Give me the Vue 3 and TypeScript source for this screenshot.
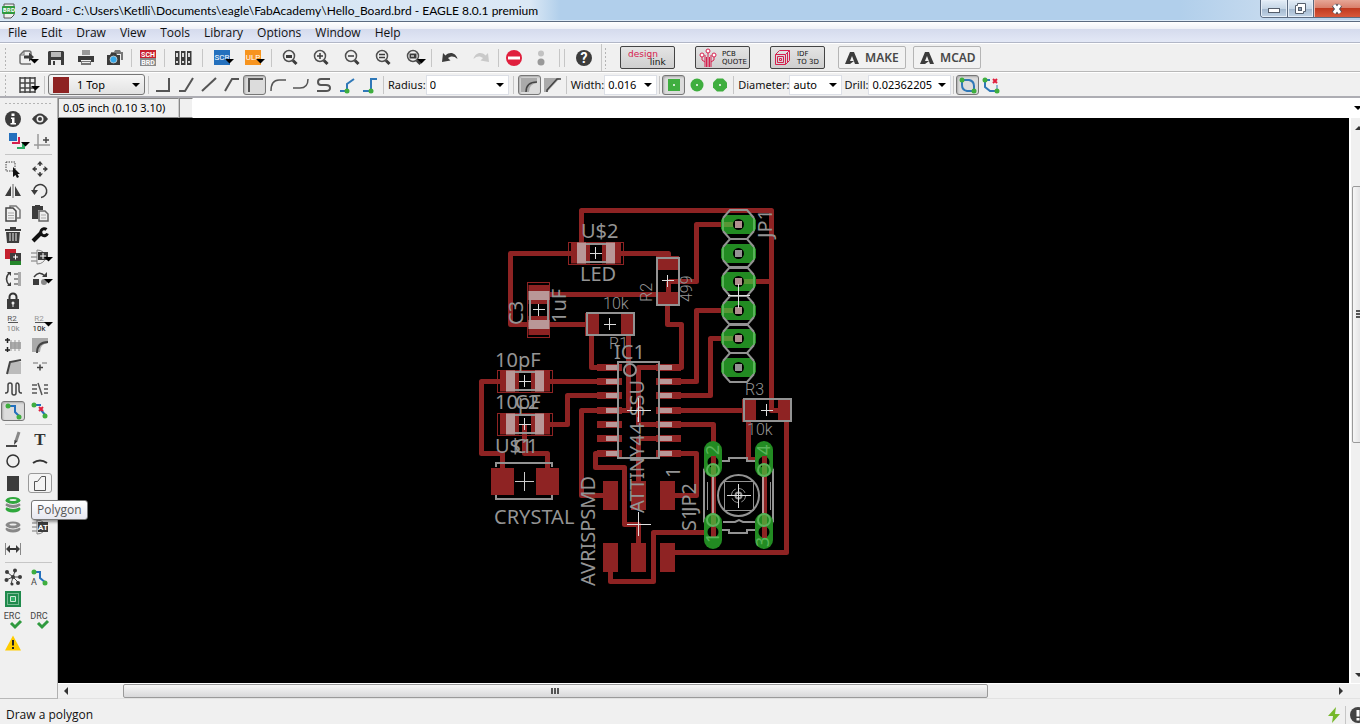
<script setup lang="ts">
import { ref } from 'vue'

interface Tool {
  id: string
  label: string
  size?: string
  on?: boolean
  hover?: boolean
}
type Item = Tool | '|' | '||'

const drop = '<path fill="#000" d="M14 11h9l-4.500 4.500z"/>'
const lens = '<circle cx="11" cy="8" r="5.500" fill="none" stroke="#505050" stroke-width="1.500"/><path d="M15 12.500l3.500 3.500" stroke="#3c3c3c" stroke-width="3"/>'
const dot = (x: number, y: number, r = 2.5): string => `<circle cx="${x}" cy="${y}" r="${r}" fill="#3fae3f"/>`
const line = (d: string, c = '#555', w = 2): string => `<path d="${d}" fill="none" stroke="${c}" stroke-width="${w}"/>`
const word = (t: string, x: number, y: number, s: number, c: string, w = 700): string =>
  `<text x="${x}" y="${y}" font-size="${s}" fill="${c}" font-weight="${w}" text-anchor="middle">${t}</text>`
const via = '<circle cx="12" cy="10" r="1" fill="#fff"/>'

const icons: Record<string, string> = {
  export: line('M15 7V5q0-2-2-2H8L4 7v7q0 2 2 2h9', '#707070', 1.5) + line('M4 7h4V3', '#707070', 1) + '<path d="M8 7.500h5V4.500l5 4.500-5 4.500v-3H8z"/>' + drop,
  save: '<path d="M4 4l1-1h14l1 1v13H4z"/><path fill="#b9b9b9" d="M7 4h10v5H7z"/><path fill="#ededed" d="M7 12h10v5H7z"/><path d="M9 13h2v4H9z"/>',
  print: '<path fill="#999" d="M8 2h8v5H8z"/><path d="M4 8h16v6h-3v-2H7v2H4z"/><path fill="#777" d="M7 13h10v4H7z"/><path fill="#eee" d="M8 14h8v1H8z"/>',
  camera: '<path fill="#777" d="M8 4h3l1-2h5l1 2h2v8h-2V6H8z"/><path d="M4 7h3l1-2h5l1 2h3v10H4z"/><circle cx="10.500" cy="11.500" r="3.500" fill="#36a7e8" stroke="#ddd" stroke-width=".7"/>',
  schbrd: '<path fill="#c8202f" d="M4 2h16v8H4z"/><path fill="#8a8a8a" d="M4 10h16v8H4z"/>' + word('SCH', 12, 9, 7, '#fff') + word('BRD', 12, 17, 7, '#fff'),
  library: '<path d="M4 3h4.500v14H4zM10 3h4.500v14H10zM16 3h4.500v14H16z"/><path fill="#ddd" d="M5 5h2v4H5zM11 5h2v4h-2zM17 5h2v4h-2zM5 13h2v2H5zM11 13h2v2h-2zM17 13h2v2h-2z"/>',
  scr: '<path fill="#2470bd" d="M3 2h16v15H3z"/>' + word('SCR', 11, 12, 8, '#fff', 400) + drop,
  ulp: '<path fill="#f7941e" d="M3 2h16v15H3z"/>' + word('ULP', 11, 12, 8, '#fff', 400) + drop,
  zfit: lens + '<path d="M8 7h6v3H8z"/>',
  zin: lens + line('M8 8h6M11 5v6', '#3c3c3c', 1.5),
  zout: lens + line('M8 8h6', '#3c3c3c', 1.5),
  zredraw: lens + line('M8 6.500h6M8 9.500h6', '#3c3c3c', 1.5),
  zselect: lens + '<path d="M7.500 5.500h7v5h-7z"/><path fill="#aaa" d="M9 7h3v2H9z"/><path fill="#000" d="M15 11h9l-4.500 4.500z"/>',
  undo: '<path d="M4 14l1-9 2.500 2.500C12 3 18 5 19.500 11 16 7.500 12.500 8 10 10l2.500 2.500z"/>',
  redo: '<path fill="#c9c9c9" d="M20 14l-1-9-2.500 2.500C12 3 6 5 4.500 11 8 7.500 11.500 8 14 10l-2.500 2.500z"/>',
  stop: '<circle cx="11" cy="10" r="8" fill="#e01f3d"/><path fill="#fff" d="M5 8.500h12v3H5z"/>',
  traffic: '<circle cx="10" cy="5.500" r="3" fill="#c2c2c2"/><circle cx="10" cy="14" r="3.500" fill="#999"/>',
  help: '<circle cx="13" cy="10" r="8"/>' + word('?', 13, 15, 14, '#fff'),
  grid: line('M4 2v16M9 2v16M14 2v16M19 2v16M4 3h15M4 8h15M4 13h15M4 17h15', '#444', 1.5) + '<path fill="#000" d="M15 11h9l-4.500 4.500z"/>',
  b0: line('M5 16h13V3'), b1: line('M5 16h6l8-13'), b2: line('M5 16l14-13'), b3: line('M5 16l7-12h7'),
  b4: line('M6 17V4h14'), b5: line('M5 16Q5 5 13 5h7', '#555', 1.5), b6: line('M4 13h7q8 0 8-9', '#555', 1.5),
  b7: line('M18 4H9q-3 0-3 3t3 3h5q4 0 4 3t-4 3H5'),
  b8: line('M5 16h7V9l7-5', '#2f78b8') + dot(12, 16), b9: line('M5 16h8V4h6', '#2f78b8') + dot(13, 16),
  miter1: '<path fill="#aaa" d="M4 3h16v5q-8 1-8 9H4z"/>' + line('M9 17Q9 7 20 7', '#444', 1.5),
  miter2: '<path fill="#aaa" d="M4 3h16L7 17H4z"/>' + line('M7 17v-2L17 4h4', '#444', 1.5),
  vsq: '<path fill="#3fae3f" d="M6 4h12v12H6z"/>' + via,
  vround: '<circle cx="12" cy="10" r="6.500" fill="#3fae3f"/>' + via,
  voct: '<path fill="#3fae3f" d="M9 3.500h6l4 4v5l-4 4H9l-4-4v-5z"/>' + via,
  poly1: line('M6 5h7q5 1 5 6v5h-7q-5-1-5-6z', '#2f78b8') + dot(6, 5) + dot(18, 16),
  poly2: line('M11 5H6v7l5 4h7', '#2f78b8') + line('M18 10v5', '#2f78b8', 1) + dot(6, 5) + dot(18, 16) + line('M14 4l4 4M18 4l-4 4', '#e01f3d'),
  info: '<circle cx="12" cy="10" r="8"/><path fill="#fff" d="M10.500 4.500h3v2.500h-3zM10 8.500h3.500V14H15v1.500H9.500V14H11v-4h-1z"/>',
  show: '<path d="M4 10q8-11 16 0-8 11-16 0z"/><circle cx="12" cy="10" r="3.500" fill="#eee"/><circle cx="12" cy="10" r="2"/>',
  layers: '<path fill="#2470bd" d="M8 2h8v8H8z"/><path fill="#d6204e" d="M17 6h2v7h-8v-2h6z"/><path fill="#2bab62" d="M21 11h3v7h-8v-2h5z"/><path fill="#000" d="M20 11h9l-4.500 4.500z"/>',
  mark: line('M10 3v15M6 14h16', '#999', 1.5) + line('M15 9h6M18 6v6', '#444', 1.5),
  group: '<path d="M5 3h9v9H5z" fill="none" stroke="#444" stroke-dasharray="1.500 1"/><path fill="#111" d="M12 8v10l2.500-2 1.500 3 2-1-1.500-3H19z"/>',
  move: '<path d="M12 2l3 3.500H9zM12 18l3-3.500H9zM4 10l3.500-3v6zM20 10l-3.500-3v6z"/>' + line('M12 5v2M12 13v2M7 10h2M15 10h2', '#3c3c3c', 1.5),
  mirror: '<path fill="#aaa" d="M11 3h2v14h-2z"/><path d="M4 15L10 5v10zM20 15L14 5v10z"/>',
  rotate: line('M6 12a6.500 6.500 0 1 1 7 4.500', '#3c3c3c', 1.5) + '<path d="M3 9h7l-3.500 5z"/>',
  copy: line('M9 5V3h6l4 4v8h-3', '#777', 1.5) + line('M5 5h7l3 3v10H5z', '#444', 1.5) + line('M7 10h6M7 12.500h6M7 15h6', '#aaa', 1),
  paste: '<path d="M4 3h3V2h5v1h3v4h-5v9H4z"/><path fill="#eee" stroke="#666" stroke-width="1.500" d="M11 8h6l3 3v7h-9z"/>' + line('M13 12h5M13 15h5', '#aaa', 1),
  trash: '<path d="M4 4h5V2h6v2h5v2H4zM5 7h14l-1 11H6z"/>' + line('M9 8v8M12 8v8M15 8v8', '#eee', 1),
  wrench: line('M5 16l8-8', '#111', 4) + line('M18.500 4.500a3.500 3.500 0 1 0 1 4', '#111', 3),
  add: '<path fill="#c4202e" d="M4 2h11v10H4z"/><path fill="#25862b" d="M9 9h11v9H9z"/><path d="M9 6h11v8H9z"/>' + line('M12 10h5M14.500 7.500v5', '#fff', 1),
  pinswap: line('M3 6h6M3 10h6M3 14h6', '#777', 1) + line('M9 3q7 0 9 7-2 7-9 7z', '#888', 1) + '<path d="M10 5h10v8H10z"/>' + line('M12 9h6M15 6v6', '#fff', 1) + '<path fill="#000" d="M16 10h9l-4.500 4.500z"/>',
  replace: line('M8 4q-5 6 0 12', '#3c3c3c', 1.5) + '<path d="M6 3h4v4zM6 17h4v-4z"/>' + line('M13 5h5M13 10h5M13 15h5', '#777', 1.5) + '<path fill="#aaa" d="M17 3h3v14h-3z"/>',
  gate: '<path d="M5 10h6v6H5z"/><circle cx="16" cy="13" r="3" fill="#888"/>' + line('M6 8q5-7 11-1', '#3c3c3c', 1.5) + '<path d="M14 8h5V3z"/><path fill="#000" d="M16 10h9l-4.500 4.500z"/>',
  lock: line('M8.500 9V6a3.500 3.500 0 0 1 7 0v3', '#333', 2) + '<path d="M6 8h12v10H6z"/><circle cx="12" cy="12" r="1.500" fill="#eee"/><path fill="#eee" d="M11.500 12h1v4h-1z"/>',
  name: word('R2', 11, 8, 8, '#555', 400) + line('M7 9.500h10', '#555', 1) + word('10k', 12, 18, 8, '#888', 400),
  value: word('R2', 11, 8, 8, '#999', 400) + line('M7 9.500h10', '#555', 1) + word('10k', 11, 18, 8, '#111', 400) + '<path fill="#000" d="M16 9h9l-4.500 4.500z"/>',
  smash: '<path fill="#aaa" d="M9 7h11v7H9z"/>' + line('M10 5v11M14 5v11M18 5v11', '#999', 1) + line('M4 5h5M6.500 3v5M4 15h5M6.500 12v5', '#222', 1.5),
  miter: '<path fill="#aaa" d="M4 3h16v5q-8 1-8 9H4z"/>' + line('M9 18Q9 7 20 7', '#444'),
  split: '<path fill="#bbb" d="M9 5h11v12H6z"/>' + line('M6 17L9 5l11-2', '#444'),
  optimize: line('M5 6h5M14 6h5', '#999', 1.5) + line('M12 7.500v6M9 10.500h6', '#444', 1.5),
  meander: line('M4 14h1q2 0 2-3V6q0-2 2-2t2 2v8q0 2 2 2t2-2V6q0-2 1-2 2 0 2 3v4q0 3 2 3h1', '#444', 1.5),
  lanes: line('M4 6h5M4 10h5M4 14h5M16 6h4M16 10h4M16 14h4', '#555', 1.5) + line('M10 4l4 12', '#555', 1.5),
  route: line('M7 5h7v6l5 5', '#2470bd', 2) + dot(7, 5) + dot(18, 16),
  ripup: line('M6 4h7M13 9l5 6', '#2470bd', 2) + dot(6, 4) + dot(17, 15) + line('M11 6l4 4M15 6l-4 4', '#e01f3d', 2),
  wire: line('M5 17h11', '#111', 1.5) + line('M15 12l3-9', '#888', 3) + '<path d="M13.500 11l3 1-3.500 4z"/>',
  text: '<text x="12" y="16" font-size="17" font-family="Liberation Serif" text-anchor="middle" font-weight="700" fill="#333">T</text>',
  circle: '<circle cx="12" cy="10" r="6" fill="none" stroke="#333" stroke-width="1.500"/>',
  arc: line('M5 12q7-5 14 0', '#333', 2),
  rect: '<path d="M6 3h12v15H6z"/>',
  polygon: line('M6.500 17.500v-9h3l4-5h4v14z', '#555', 1),
  via: '<ellipse cx="12" cy="14" rx="7.500" ry="3.500" fill="#2fa83c"/><ellipse cx="12" cy="10" rx="7.500" ry="3.500" fill="#888"/><ellipse cx="12" cy="5.500" rx="7.500" ry="3.500" fill="#2fa83c"/><ellipse cx="12" cy="5" rx="3.500" ry="1" fill="#eee"/>' + line('M5 7.500q7 4 14 0M5 11.500q7 4 14 0', '#eee', 1),
  hole: '<ellipse cx="12" cy="12" rx="7.500" ry="3.500" fill="#888"/><ellipse cx="12" cy="8" rx="7.500" ry="3.500" fill="#888"/><ellipse cx="12" cy="7.500" rx="3.500" ry="1" fill="#eee"/>' + line('M5 10q7 4 14 0', '#eee', 1),
  attr: line('M4 6h5M4 10h5M4 14h5', '#777', 1) + line('M9 3q7 0 9 7-2 7-9 7z', '#888', 1) + '<path d="M10 5h10v10H10z"/>' + word('AT', 15, 13, 8, '#fff'),
  dim: line('M4.500 4v12M19.500 4v12', '#888', 1) + line('M8 10h8', '#333', 2) + '<path d="M5 10l4-4v8zM19 10l-4-4v8z"/>',
  ratsnest: line('M6 5l6 5 2-6M5 13l7-3 7 0M10 17l2-7 5 5', '#444', 1) + '<circle cx="6" cy="5" r="2"/><circle cx="14" cy="3.500" r="2"/><circle cx="12" cy="10" r="2"/><circle cx="5.500" cy="13" r="2"/><circle cx="19" cy="10" r="2"/><circle cx="17" cy="16" r="2"/><circle cx="11" cy="17" r="1.500"/>',
  auto: line('M6 5h6v6l6 5', '#2470bd', 2) + dot(6, 5) + dot(17, 16) + word('A', 6, 18, 9, '#444', 400),
  fab: '<path fill="#1f8a4c" d="M4 2h16v16H4z"/><path fill="none" stroke="#cfe8d6" stroke-dasharray="1 1" d="M6.500 4.500h11v11h-11z"/><path fill="#2fae66" stroke="#cfe8d6" d="M9.500 7.500h5v5h-5z"/>',
  erc: word('ERC', 11, 8, 9, '#444', 400) + line('M10 12l4 4 6-6', '#2f9a3f', 3),
  drc: word('DRC', 11, 8, 9, '#444', 400) + line('M10 12l4 4 6-6', '#2f9a3f', 3),
  warn: '<path fill="#fc0" d="M12 2.500L20 17.500H4z"/><path fill="#222" d="M11 7h2v5.500h-2zM11 14h2v2h-2z"/>',
}

const t = (id: string, label: string, size = 'md', extra: Partial<Tool> = {}): Tool => ({ id, label, size, ...extra })

const mainTools: Item[] = [
  t('export', 'Open', 'sm'), t('save', 'Save', 'sm'), t('print', 'Print'), t('camera', 'CAM', 'sm'), '|',
  t('schbrd', 'Schematic', 'sm'), '|', t('library', 'Use library'), '||',
  t('scr', 'Script'), t('ulp', 'ULP'), '|',
  t('zfit', 'Zoom to fit'), t('zin', 'Zoom in'), t('zout', 'Zoom out'), t('zredraw', 'Redraw'), t('zselect', 'Zoom select'), '|',
  t('undo', 'Undo'), t('redo', 'Redo'), '|',
  t('stop', 'Stop', 'sm'), t('traffic', 'Go', 'sm'), '|', '|', t('help', 'Help'),
]

const bends: Tool[] = [0, 1, 2, 3, 4, 5, 6, 7, 8, 9].map((i) => t('b' + i, 'Bend style ' + i, 'xs', { on: i === 4 }))

const palette: Tool[][] = [
  [t('info', 'Info'), t('show', 'Show'), t('layers', 'Layer settings'), t('mark', 'Mark')],
  [
    t('group', 'Group'), t('move', 'Move'), t('mirror', 'Mirror'), t('rotate', 'Rotate'), t('copy', 'Copy'), t('paste', 'Paste'),
    t('trash', 'Delete'), t('wrench', 'Change'), t('add', 'Add'), t('pinswap', 'Pinswap'), t('replace', 'Replace'), t('gate', 'Gateswap'),
    t('lock', 'Lock'), t('', ''), t('name', 'Name'), t('value', 'Value'), t('smash', 'Smash'), t('miter', 'Miter'), t('split', 'Split'),
    t('optimize', 'Optimize'), t('meander', 'Meander'), t('lanes', 'Lanes'), t('route', 'Route', 'md', { on: true }), t('ripup', 'Ripup'),
  ],
  [
    t('wire', 'Wire'), t('text', 'Text'), t('circle', 'Circle'), t('arc', 'Arc'), t('rect', 'Rect'), t('polygon', 'Polygon', 'md', { hover: true }),
    t('via', 'Via'), t('', ''), t('hole', 'Hole'), t('attr', 'Attribute'), t('dim', 'Dimension'),
  ],
  [t('ratsnest', 'Ratsnest'), t('auto', 'Autorouter'), t('fab', 'Manufacturing'), t('', ''), t('erc', 'ERC'), t('drc', 'DRC'), t('warn', 'Errors')],
]

const menus = ['File', 'Edit', 'Draw', 'View', 'Tools', 'Library', 'Options', 'Window', 'Help']

const layer = ref('1 Top')
const radius = ref('0')
const width = ref('0.016')
const diameter = ref('auto')
const drill = ref('0.02362205')
const command = ref('')

// Copper routes on the top layer
const traces: string[] = [
  'M581 243V210H771V410H783', 'M586 253H510V324H587', 'M606 253H668V260', 'M548 294H668V281', 'M591 334V367H605',
  'M628 334V410H605', 'M667 304V324H681V367H664', 'M668 281H696V224H738', 'M738 281H772', 'M738 310H696V381H664',
  'M738 338H710V395H664', 'M664 410H745', 'M664 367H638V424H713V532', 'M664 438H638V490', 'M664 453H696V495H668',
  'M545 381H605', 'M605 395H567V424H545', 'M605 410H581V495H605', 'M605 453H595V467H624V524H638V550',
  'M505 381H481V453H502V472', 'M524 424V453H547V472', 'M610 560V581H653V532H714', 'M786 418V552H668', 'M748 418V459H764V531',
]
const icRows = [367, 381, 395, 410, 424, 438, 453]
const caps = [
  { x: 596, y: 253, r: 0 }, { x: 525, y: 381, r: 0 }, { x: 525, y: 424, r: 0 }, { x: 539, y: 310, r: 90 },
]
const resistors = [
  { x: 610, y: 324, r: 0 }, { x: 668, y: 281, r: 90 }, { x: 767, y: 410, r: 0 },
]
const headerPins = [
  { y: 224, side: -1 }, { y: 253, side: 0 }, { y: 281, side: 1 }, { y: 310, side: -1 }, { y: 338, side: -1 }, { y: 367, side: 0 },
]
const smdPads = [603, 631, 660]
const switchPads = [
  { x: 704, y: 441, hole: 462, ring: 470 }, { x: 755, y: 441, hole: 462, ring: 470 },
  { x: 704, y: 513, hole: 532, ring: 520 }, { x: 755, y: 513, hole: 532, ring: 520 },
]
const labels = [
  { s: 'U$2', x: 581, y: 238 }, { s: 'LED', x: 580, y: 281 }, { s: 'C3', x: 523, y: 325, v: 1 }, { s: '1uF', x: 566, y: 323, v: 1 },
  { s: 'IC1', x: 614, y: 359 }, { s: '10pF', x: 495, y: 367 }, { s: '10pF', x: 495, y: 409 }, { s: 'C2', x: 515, y: 409 },
  { s: 'U$1', x: 495, y: 453 }, { s: 'C1', x: 514, y: 453 }, { s: 'CRYSTAL', x: 494, y: 524 }, { s: 'AVRISPSMD', x: 595, y: 586, v: 1 },
  { s: 'ATTINY44-SSU', x: 644, y: 513, v: 1 }, { s: '1', x: 680, y: 478, v: 1 }, { s: 'S1', x: 696, y: 531, v: 1 }, { s: 'JP2', x: 696, y: 512, v: 1 },
  { s: 'JP1', x: 772, y: 238, v: 1 },
]
const thinLabels = [
  { s: '10k', x: 603, y: 309 }, { s: 'R1', x: 609, y: 349 }, { s: 'R2', x: 652, y: 302, v: 1 }, { s: '499', x: 692, y: 302, v: 1 },
  { s: 'R3', x: 745, y: 395 }, { s: '10k', x: 747, y: 435 },
]
const padLabels = [
  { s: '2', x: 719, y: 455 }, { s: '4', x: 770, y: 455 }, { s: '1', x: 719, y: 543 }, { s: '3', x: 769, y: 547 },
]
</script>

<template>
  <div class="window">
    <header class="titlebar">
      <svg class="app-icon" viewBox="0 0 16 16"><path d="M3 1h10v11l-3 3H3z" fill="#eee" stroke="#555" /><rect x="1" y="3" width="13" height="8" rx="1" fill="#2f9a3f" /><text x="8" y="9" font-size="6" font-weight="700" fill="#fff" text-anchor="middle">BRD</text></svg>
      <h1>2 Board - C:\Users\Ketlli\Documents\eagle\FabAcademy\Hello_Board.brd - EAGLE 8.0.1 premium</h1>
      <div class="win-buttons">
        <button class="wb min" aria-label="Minimize"><svg width="14" height="12"><rect x="1.500" y="5.500" width="11" height="4" fill="#fff" stroke="#555e6b" /></svg></button>
        <button class="wb max" aria-label="Restore"><svg width="14" height="14"><path d="M4.500 1.500h8v8h-2v2h-8v-8h2z" fill="#fff" stroke="#555e6b" /><rect x="5.500" y="5.500" width="3" height="3" fill="#8ba0b8" stroke="#555e6b" /></svg></button>
        <button class="wb close" aria-label="Close"><svg width="14" height="12"><path d="M4 2l6 8M10 2l-6 8" stroke="#4b4f5c" stroke-width="5" /><path d="M4 2l6 8M10 2l-6 8" stroke="#fff" stroke-width="3" /></svg></button>
      </div>
    </header>

    <nav class="menubar">
      <button v-for="m in menus" :key="m">{{ m }}</button>
    </nav>

    <div class="toolbar first">
      <span class="grip"></span>
      <template v-for="(it, i) in mainTools" :key="i">
        <span v-if="it === '|'" class="sep"></span>
        <span v-else-if="it === '||'" class="sep wide"></span>
        <button v-else class="tool" :class="it.size" :aria-label="it.label"><svg class="ic" viewBox="0 0 24 20" v-html="icons[it.id]"></svg></button>
      </template>
      <span class="sep edge"></span>
      <span class="grip second"></span>
      <button class="promo design"><span class="red">design</span><span class="link">link</span></button>
      <button class="promo">
        <svg width="18" height="20" viewBox="0 0 18 20"><path d="M3 9v3l3 2v5M9 5v14M15 9v3l-3 2v5M6 7v7M12 7v7M7.500 9v10M10.500 9v10" fill="none" stroke="#d6204e" stroke-width="1" /><g fill="#fff" stroke="#d6204e"><circle cx="3" cy="7" r="2" /><circle cx="9" cy="3" r="2" /><circle cx="15" cy="7" r="2" /></g></svg>
        <span class="two">PCB<br />QUOTE</span>
      </button>
      <button class="promo">
        <svg width="18" height="18" viewBox="0 0 18 18"><path d="M1.500 5.500h10v10h-10zM1.500 5.500l4-4h10v10l-4 4M11.500 5.500l4-4M3.500 7.500h6v6h-6zM5.500 9.500h2v2h-2zM13.500 4v9" fill="none" stroke="#d6204e" /></svg>
        <span class="two">IDF<br />TO 3D</span>
      </button>
      <button class="brand"><svg width="14" height="14" viewBox="0 0 14 14"><path d="M0 13L5 1h4l5 12h-4L7 5l-2 5h4l-4 3z" fill="#3c3c3c" /></svg>MAKE</button>
      <button class="brand"><svg width="14" height="14" viewBox="0 0 14 14"><path d="M0 13L5 1h4l5 12h-4L7 5l-2 5h4l-4 3z" fill="#3c3c3c" /></svg>MCAD</button>
    </div>

    <div class="toolbar params">
      <span class="grip"></span>
      <button class="tool sm" aria-label="Grid"><svg class="ic" viewBox="0 0 24 20" v-html="icons.grid"></svg></button>
      <span class="sep"></span>
      <span class="combo layer">
        <i class="swatch"></i>
        <select v-model="layer" aria-label="Layer"><option>1 Top</option><option>16 Bottom</option></select>
        <i class="arrow"></i>
      </span>
      <span class="sep"></span>
      <button v-for="b in bends" :key="b.id" class="tool xs" :class="{ on: b.on }" :aria-label="b.label"><svg class="ic" viewBox="0 0 24 20" v-html="icons[b.id]"></svg></button>
      <span class="sep"></span>
      <label for="radius">Radius:</label>
      <span class="combo w82"><select id="radius" v-model="radius"><option>0</option></select><i class="arrow"></i></span>
      <span class="sep wide"></span>
      <button class="tool xs on" aria-label="Round miter"><svg class="ic" viewBox="0 0 24 20" v-html="icons.miter1"></svg></button>
      <button class="tool xs" aria-label="Straight miter"><svg class="ic" viewBox="0 0 24 20" v-html="icons.miter2"></svg></button>
      <span class="sep"></span>
      <label for="width">Width:</label>
      <span class="combo w53"><select id="width" v-model="width"><option>0.016</option></select><i class="arrow"></i></span>
      <span class="sep"></span>
      <button class="tool xs on" aria-label="Square via"><svg class="ic" viewBox="0 0 24 20" v-html="icons.vsq"></svg></button>
      <button class="tool xs" aria-label="Round via"><svg class="ic" viewBox="0 0 24 20" v-html="icons.vround"></svg></button>
      <button class="tool xs" aria-label="Octagon via"><svg class="ic" viewBox="0 0 24 20" v-html="icons.voct"></svg></button>
      <span class="sep"></span>
      <label for="diameter">Diameter:</label>
      <span class="combo w53"><select id="diameter" v-model="diameter"><option>auto</option></select><i class="arrow"></i></span>
      <label for="drill">Drill:</label>
      <span class="combo w82"><select id="drill" v-model="drill"><option>0.02362205</option></select><i class="arrow"></i></span>
      <span class="sep"></span>
      <button class="tool xs on" aria-label="Keep loops"><svg class="ic" viewBox="0 0 24 20" v-html="icons.poly1"></svg></button>
      <button class="tool xs" aria-label="Remove loops"><svg class="ic" viewBox="0 0 24 20" v-html="icons.poly2"></svg></button>
    </div>

    <div class="body">
      <aside class="palette">
        <span class="hgrip"></span>
        <div v-for="(group, g) in palette" :key="g" class="group">
          <template v-for="(it, i) in group" :key="i">
            <span v-if="!it.id" class="cell"></span>
            <span v-else class="cell">
              <button class="tool" :class="{ on: it.on, hover: it.hover }" :aria-label="it.label"><svg class="ic" viewBox="0 0 24 20" v-html="icons[it.id]"></svg></button>
              <span v-if="it.hover" class="tooltip" role="tooltip">{{ it.label }}</span>
            </span>
          </template>
        </div>
      </aside>

      <main class="work">
        <div class="cmdline">
          <output class="coords">0.05 inch (0.10 3.10)</output>
          <span class="slot"></span>
          <input v-model="command" type="text" aria-label="Command line" />
          <i class="arrow end"></i>
        </div>
        <div class="view">
          <svg class="board" viewBox="58 118 1291 565" preserveAspectRatio="xMinYMin slice">
            <g transform="translate(.5 .5)" fill="none" stroke="#8e2323" stroke-width="5" stroke-linejoin="round"><path v-for="d in traces" :key="d" :d="d" /></g>

            <g v-for="y in icRows" :key="y">
              <path :d="`M597 ${y - 3}h25v7h-25zM656 ${y - 3}h25v7h-25z`" fill="#8e2323" />
              <path :d="`M606 ${y - 2}h13v5h-13zM659 ${y - 2}h13v5h-13z`" fill="#b99797" />
            </g>
            <g v-for="x in smdPads" :key="x" fill="#8e2323"><rect :x="x" y="481" width="15" height="29" /><rect :x="x" y="543" width="15" height="29" /></g>
            <path d="M491 468h23v27h-23zM536 468h23v27h-23z" fill="#8e2323" />
            <path d="M496 467v-4h56v4M496 495v4h56v-4" fill="none" stroke="#939393" stroke-width="2" />
            <path d="M515 481.500h19M524.500 472v19" stroke="#ccc" />

            <g v-for="(c, i) in caps" :key="'c' + i" :transform="`translate(${c.x} ${c.y}) rotate(${c.r})`">
              <path d="M-25-10.500h19v21h-19zM6-10.500h19v21h-19z" fill="#8e2323" />
              <rect x="-27.500" y="-10.500" width="55" height="22" fill="none" stroke="#8e2323" />
              <path d="M-19-10.500h9v21h-9zM10-10.500h9v21h-9z" fill="#b99797" />
              <path d="M-10-9h20M-10 9h20" stroke="#939393" stroke-width="2" />
              <path d="M-6 .5h12M-.5-6v12" stroke="#ddd" />
            </g>
            <g v-for="(c, i) in resistors" :key="'r' + i" :transform="`translate(${c.x} ${c.y}) rotate(${c.r})`">
              <path d="M-25-11h14v23h-14zM11-11h14v23h-14z" fill="#8e2323" />
              <rect x="-23" y="-11" width="47" height="22" fill="none" stroke="#939393" stroke-width="2" />
              <path d="M-6 .5h12M-.5-6v12" stroke="#ddd" />
            </g>

            <g fill="none" stroke="#939393" stroke-width="2">
              <path d="M618 362H659V458H618z" />
              <circle cx="630" cy="370" r="6" />
            </g>

            <g v-for="p in headerPins" :key="p.y" :transform="`translate(738 ${p.y})`">
              <path d="M-12-9h25l5 5v9l-5 5h-25l-5-5v-9z" fill="#228b22" />
              <path v-if="p.side" :d="p.side < 0 ? 'M-15 .5H-5' : 'M15 .5H5'" stroke="#5a9636" stroke-width="5" />
              <circle cx=".5" cy=".5" r="5.500" fill="#000" />
              <rect x="-3" y="-3" width="7" height="7" :fill="p.side ? '#b08f8f' : '#939393'" />
              <path d="M-15-6V7M16-6V7" stroke="#59b359" stroke-width="2" />
              <path d="M-15-6l7-8h17l7 8M-15 7l7 8h17l7-8" fill="none" stroke="#939393" stroke-width="2" />
            </g>

            <g fill="none" stroke="#939393" stroke-width="2">
              <path d="M711 461h18v-3h18v3h18M711 530h18v3h18v-3h18M704 469v53M773 469v53M704 469l8-8M773 469l-8-8M704 522l8 8M773 522l-8 8" />
              <path d="M723 522h12l4-2 4 2h12" />
              <circle cx="738.500" cy="495.500" r="20.500" />
              <path d="M707.500 482v28M770.500 482v28M724.500 481.500h29v29h-29z" stroke-width="1" />
              <circle cx="738.500" cy="495.500" r="7" stroke-width="1" stroke-dasharray="8 3" />
              <circle cx="738.500" cy="495.500" r="3" />
            </g>
            <g v-for="p in switchPads" :key="p.x + '-' + p.y">
              <rect :x="p.x" :y="p.y" width="18" height="36" rx="9" fill="#228b22" />
              <circle :cx="p.x + 9" :cy="p.hole" r="5.500" fill="#000" />
              <path :d="`M${p.x + 9.500} ${p.hole - 6}v12`" stroke="#8e2323" stroke-width="5" />
              <path :d="`M${p.x + 9.500} ${p.ring - 6}v12`" stroke="#5a9636" stroke-width="5" />
              <circle :cx="p.x + 9" :cy="p.ring" r="6" fill="none" stroke="#59b359" stroke-width="2" />
            </g>
            <path d="M713 477v36M763 477v36" stroke="#b99797" stroke-width="2" />

            <g class="silk">
              <text v-for="(l, i) in labels" :key="i" :transform="`translate(${l.x} ${l.y}) rotate(${l.v ? -90 : 0})`">{{ l.s }}</text>
            </g>
            <g class="silk thin">
              <text v-for="(l, i) in thinLabels" :key="i" :transform="`translate(${l.x} ${l.y}) rotate(${l.v ? -90 : 0})`">{{ l.s }}</text>
            </g>
            <g class="silk pad">
              <text v-for="(l, i) in padLabels" :key="i" :transform="`translate(${l.x} ${l.y}) rotate(-90)`">{{ l.s }}</text>
            </g>
            <path d="M627 410.500h24M638.500 398v24M627 524.500h24M638.500 512v24M728 295.500h22M738.500 284v24M727 495.500h24M738.500 484v24" stroke="#e0e0e0" />
          </svg>
          <div class="vscroll">
            <i class="tri up"></i><span class="lead"></span><span class="thumb"><i></i></span><span class="trail"></span><i class="tri down"></i>
          </div>
        </div>
        <div class="hscroll">
          <i class="tri left"></i><span class="lead"></span><span class="thumb"><i></i></span><span class="trail"></span><i class="tri right"></i>
        </div>
      </main>
    </div>

    <footer class="status">
      <span class="msg">Draw a polygon</span>
      <svg width="14" height="18" viewBox="0 0 14 18"><path d="M9 1L1 10h5l-1 7 8-9H8z" fill="#76b82a" /></svg>
      <span class="sep"></span>
      <span class="alert"><svg width="16" height="16" viewBox="0 0 16 16"><circle cx="8" cy="8" r="8" fill="#444" /><path d="M6.500 3h3v6.500h-3zM6.500 11h3v2.500h-3z" fill="#fff" /></svg></span>
    </footer>
  </div>
</template>

<style>
html, body { margin: 0; overflow: hidden; }
</style>

<style scoped>
.window { display: flex; flex-direction: column; height: 100vh; overflow: hidden; background: #f0f0f0; color: #111; font: 12px/16px "Open Sans", "Noto Sans", sans-serif; }
button { font: inherit; color: inherit; padding: 0; margin: 0; border: 0; background: none; }
svg { display: block; flex: none; }

.titlebar { display: flex; align-items: center; height: 21px; flex: none; border-bottom: 1px solid #5b6b80; background: linear-gradient(90deg, #d3e3f3, #dbe8f5 530px, #b1cfeb 560px, #b1cfeb 1180px, #c4d9ee 1260px, #b9d1ea); box-shadow: inset 0 -1px #dcebf8; }
.app-icon { width: 16px; height: 16px; margin: 0 4px 0 1px; }
h1 { flex: 1; margin: 0; font: 400 12px/22px Lato, "Open Sans", sans-serif; color: #000; white-space: nowrap; }
.win-buttons { display: flex; align-self: flex-start; width: 100px; height: 18px; overflow: hidden; box-sizing: border-box; border: 1px solid #5b6b80; border-top: 0; border-right: 0; border-radius: 0 0 0 4px; }
.wb { display: flex; align-items: center; justify-content: center; border-right: 1px solid #5b6b80; background: linear-gradient(#e3edf7, #c6d6e6 50%, #a2b7cd 51%, #c3d5e7); box-shadow: inset 0 0 0 1px #e6eef7; }
.min { width: 28px; }
.max { width: 27px; }
.close { width: 46px; flex: none; border: 0; background: linear-gradient(#e6a696, #d9806c 45%, #c03a20 50%, #d8583b); box-shadow: inset 1px 0 #efb9ad; }

.menubar { display: flex; gap: 14px; box-sizing: border-box; padding: 2px 0 0 8px; height: 21px; flex: none; border-bottom: 1px solid #b2b7c7; background: linear-gradient(#fff, #eef1f7 35%, #d5dbed 36%, #e3e8f6); }

.toolbar { display: flex; align-items: center; flex: none; border-top: 1px solid #fff; border-bottom: 1px solid #b8b8b8; overflow: hidden; }
.first { height: 27px; }
.params { height: 23px; border-bottom: 2px solid #adadb3; font-family: "Noto Sans", sans-serif; font-size: 11px; }
.grip { width: 3px; height: 22px; margin: 0 7px 0 4px; flex: none; background: radial-gradient(circle, #b4b4b4 1px, transparent 1px) 0 0 / 3px 4px; }
.grip.second { margin: 0 13px 0 2px; }
.sep { width: 1px; height: 18px; margin: 0 2px; flex: none; background: #c6c6c6; }
.sep.wide { margin: 0 4px; }
.sep.edge { height: 28px; margin: 0 0 0 3px; }
.tool { display: flex; align-items: center; justify-content: center; box-sizing: border-box; flex: none; width: 31px; height: 20px; border-radius: 3px; }
.tool.sm { width: 28px; }
.tool.xs { width: 23px; }
.tool.on { border: 1px solid #777; background: #dcdcdc; box-shadow: inset 1px 1px 2px #aaa; }
.tool.hover { border: 1px solid #999; background: #f4f4f4; }
.ic { width: 24px; height: 20px; overflow: visible; fill: #3c3c3c; font-family: Roboto, sans-serif; }

.promo { display: flex; align-items: center; gap: 5px; box-sizing: border-box; flex: none; width: 55px; height: 23px; margin-right: 20px; padding-left: 3px; border: 1px solid #444; border-radius: 2px; background: linear-gradient(#e4e4e4, #cfcfcf); text-align: left; font: 7px/8px "DejaVu Sans", sans-serif; }
.promo.design { gap: 0; padding-left: 7px; font-size: 9px; line-height: 9px; }
.red { color: #d6204e; align-self: flex-start; padding-top: 3px; }
.link { align-self: flex-end; margin-left: -8px; padding-bottom: 1px; }
.brand { display: flex; align-items: center; gap: 6px; box-sizing: border-box; flex: none; width: 68px; height: 23px; margin-right: 7px; padding-left: 6px; border: 1px solid #b5b5b5; border-radius: 2px; background: #f2f2f2; color: #484848; font: 600 12px/16px "Noto Sans", sans-serif; }
.promo + .brand { margin-left: -7px; }

.combo { display: grid; align-items: center; flex: none; box-sizing: border-box; height: 20px; border: 1px solid #dcdfe6; background: #fff; }
.combo > * { grid-area: 1 / 1; }
.combo select { appearance: none; width: 100%; height: 18px; padding: 0 0 0 3px; border: 0; background: none; font: inherit; color: #000; }
.combo.layer { width: 97px; height: 21px; margin: 0 1px; border: 1px solid #777; border-radius: 3px; background: linear-gradient(#f6f6f6, #e2e2e2); }
.combo.layer select { padding-left: 28px; }
.w82 { width: 83px; }
.w53 { width: 53px; }
.swatch { width: 16px; height: 16px; margin-left: 4px; background: #8e2323; }
.arrow { justify-self: end; width: 0; height: 0; margin-right: 4px; border: 4px solid transparent; border-top-color: #000; border-bottom: 0; pointer-events: none; }
.params label { margin: 0 0 0 2px; }

.body { display: flex; flex: 1; min-height: 0; }
.palette { width: 57px; flex: none; border-right: 1px solid #b0b0b0; border-bottom: 1px solid #b8b8b8; }
.hgrip { display: block; height: 3px; margin: 4px 4px 3px; background: radial-gradient(circle, #b4b4b4 1px, transparent 1px) 0 0 / 4px 3px; }
.group { display: grid; grid-template-columns: 26px 27px; grid-auto-rows: 22px; }
.group + .group { margin-top: 2px; padding-top: 4px; background: linear-gradient(#c6c6c6, #c6c6c6) 5px 0 / 47px 1px no-repeat; }
.cell { position: relative; display: flex; align-items: center; justify-content: center; }
.cell .tool { width: 24px; }
.tooltip { position: absolute; z-index: 2; left: 5px; top: 28px; padding: 0 5px; border: 1px solid #767676; border-radius: 3px; background: linear-gradient(#fff, #e6e7f0); color: #575757; line-height: 18px; box-shadow: 2px 2px 3px #0006; }

.work { display: flex; flex-direction: column; flex: 1; min-width: 0; }
.cmdline { display: flex; align-items: center; flex: none; height: 20px; background: #fff; overflow: hidden; font-family: "Noto Sans", sans-serif; font-size: 11px; }
.coords { width: 115px; height: 18px; padding-left: 4px; border: 1px solid #888; border-right-color: #ccc; background: #f0f0f0; line-height: 18px; color: #000; }
.slot { width: 12px; height: 18px; border: 1px solid #888; border-right-color: #fff; background: #f0f0f0; }
.cmdline input { flex: 1; min-width: 0; border: 0; padding: 0 4px; outline: 0; font: inherit; background: #fff; }
.arrow.end { margin-right: -2px; }
.view { display: flex; flex: 1; min-height: 0; }
.board { flex: 1; min-width: 0; width: 0; height: 100%; background: #000; }
.silk { fill: #949494; font-family: "Noto Sans", sans-serif; font-size: 20px; }
.silk.thin { font-family: Roboto, sans-serif; font-size: 16px; font-weight: 300; }
.silk.pad { fill: #59b359; font-size: 18px; }

.vscroll { display: flex; flex-direction: column; align-items: center; width: 17px; margin-right: -6px; flex: none; box-sizing: border-box; border-left: 2px solid #fff; background: #f0f0f0; padding: 8px 0 6px; }
.hscroll { display: flex; align-items: center; height: 14px; flex: none; border-top: 1px solid #fff; border-bottom: 1px solid #e2e2e2; padding: 0 17px 0 6px; background: #f0f0f0; }
.tri { width: 0; height: 0; flex: none; border: 4px solid transparent; }
.up { border-top: 0; border-bottom-color: #333; }
.down { border-bottom: 0; border-top-color: #333; }
.left { border-left: 0; border-right-color: #333; }
.right { border-right: 0; border-left-color: #333; }
.thumb { display: flex; align-items: center; justify-content: center; box-sizing: border-box; border: 1px solid #9a9a9a; border-radius: 2px; background: linear-gradient(#f6f6f6, #d8d8da); }
.vscroll .thumb { width: 14px; flex: 254; background: linear-gradient(90deg, #f6f6f6, #d8d8da); }
.vscroll .lead { flex: 56; }
.vscroll .trail { flex: 230; }
.hscroll .thumb { height: 14px; flex: 864; }
.hscroll .lead { flex: 55; }
.hscroll .trail { flex: 352; }
.hscroll .thumb i { width: 8px; height: 6px; background: repeating-linear-gradient(90deg, #555 0 2px, transparent 2px 3px); }
.vscroll .thumb i { width: 6px; height: 8px; background: repeating-linear-gradient(#555 0 2px, transparent 2px 3px); }

.status { display: flex; align-items: center; flex: none; height: 25px; padding: 6px 0 0 6px; box-sizing: border-box; overflow: hidden; }
.msg { flex: 1; line-height: 20px; }
.status .sep { margin: 0 4px; }
.alert { width: 10px; overflow: hidden; }
</style>
